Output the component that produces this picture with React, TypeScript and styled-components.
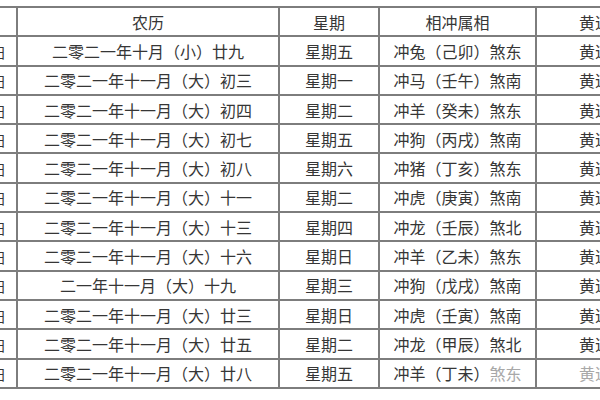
import React from "react";
import styled, { createGlobalStyle } from "styled-components";

const rows = [
  ["2021年12月3日", "二零二一年十月（小）廿九", "星期五", "冲兔（己卯）煞东"],
  ["2021年12月6日", "二零二一年十一月（大）初三", "星期一", "冲马（壬午）煞南"],
  ["2021年12月7日", "二零二一年十一月（大）初四", "星期二", "冲羊（癸未）煞东"],
  ["2021年12月10日", "二零二一年十一月（大）初七", "星期五", "冲狗（丙戌）煞南"],
  ["2021年12月11日", "二零二一年十一月（大）初八", "星期六", "冲猪（丁亥）煞东"],
  ["2021年12月14日", "二零二一年十一月（大）十一", "星期二", "冲虎（庚寅）煞南"],
  ["2021年12月16日", "二零二一年十一月（大）十三", "星期四", "冲龙（壬辰）煞北"],
  ["2021年12月19日", "二零二一年十一月（大）十六", "星期日", "冲羊（乙未）煞东"],
  ["2021年12月22日", "二一年十一月（大）十九", "星期三", "冲狗（戊戌）煞南"],
  ["2021年12月26日", "二零二一年十一月（大）廿三", "星期日", "冲虎（壬寅）煞南"],
  ["2021年12月28日", "二零二一年十一月（大）廿五", "星期二", "冲龙（甲辰）煞北"],
  ["2021年12月31日", "二零二一年十一月（大）廿八", "星期五", "冲羊（丁未）煞东"],
];

const GlobalStyle = createGlobalStyle`
  html, body {
    margin: 0;
    padding: 0;
    background: #fff;
    overflow: hidden;
  }
  body {
    font-family: "Noto Sans CJK SC", "Noto Sans", sans-serif;
  }
`;

const Page = styled.div`
  width: 600px;
  height: 400px;
  overflow: hidden;
  padding-top: 6px;
  box-sizing: border-box;
`;

const Table = styled.table`
  border-collapse: collapse;
  table-layout: fixed;
  width: 790px;
  margin-left: -105px;
  color: #363636;
  font-size: 16px;
  line-height: 1;
`;

const Cell = styled.td<{ $align?: string }>`
  border: 2px solid #7d7d7d;
  height: 27.3px;
  padding: 0;
  text-align: ${(p) => p.$align || "center"};
  white-space: nowrap;
  overflow: hidden;
`;

const DateText = styled.span`
  padding-right: 10px;
  font-size: 14px;
`;

// watermark-washed text in the last row
const Faded = styled.span`
  color: #a8a8a8;
`;

export default function App() {
  return (
    <Page>
      <GlobalStyle />
      <Table>
        <colgroup>
          <col style={{ width: 121 }} />
          <col style={{ width: 262 }} />
          <col style={{ width: 100 }} />
          <col style={{ width: 157 }} />
          <col style={{ width: 150 }} />
        </colgroup>
        <tbody>
          <tr>
            <Cell>日期</Cell>
            <Cell>农历</Cell>
            <Cell>星期</Cell>
            <Cell>相冲属相</Cell>
            <Cell>黄道吉日</Cell>
          </tr>
          {rows.map((r, i) => {
            const last = i === rows.length - 1;
            return (
              <tr key={i}>
                <Cell $align="right">
                  <DateText>{r[0]}</DateText>
                </Cell>
                <Cell>{r[1]}</Cell>
                <Cell>{r[2]}</Cell>
                <Cell>
                  {last ? (
                    <>
                      {r[3].slice(0, 6)}
                      <Faded>{r[3].slice(6)}</Faded>
                    </>
                  ) : (
                    r[3]
                  )}
                </Cell>
                <Cell>{last ? <Faded>黄道吉日</Faded> : "黄道吉日"}</Cell>
              </tr>
            );
          })}
        </tbody>
      </Table>
    </Page>
  );
}
